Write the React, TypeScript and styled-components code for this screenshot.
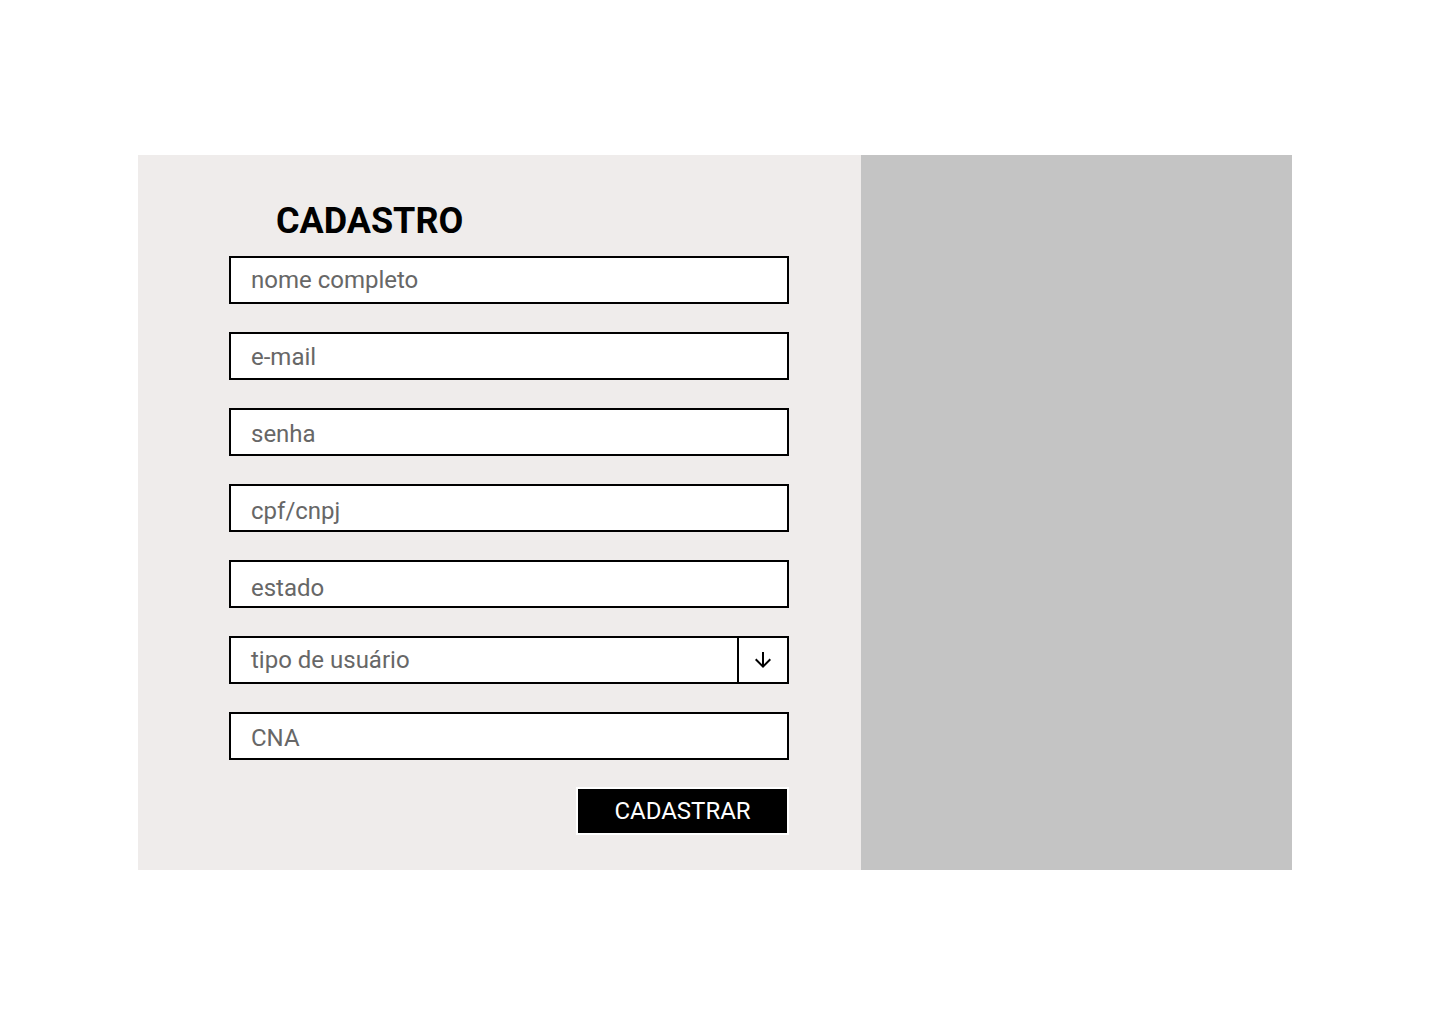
import styled, { createGlobalStyle } from 'styled-components'
import { MdArrowDownward } from 'react-icons/md'

const GlobalStyle = createGlobalStyle`
    body {
        margin: 0;
        background: #fff;
        font-family: Roboto, "Liberation Sans", sans-serif;
    }
    * {
        box-sizing: border-box;
    }
`

const Page = styled.div`
    padding: 155px 0 0 138px;
`

const Panel = styled.main`
    display: flex;
    width: 1154px;
`

const FormSide = styled.section`
    width: 723px;
    background-color: #efeceb;
    padding: 45px 72px 35px 91px;
`

const ImageSide = styled.aside`
    flex: 1;
    background-color: #c4c4c4;
`

const Title = styled.h1`
    margin: 0 0 14px 47px;
    font-size: 36px;
    font-weight: 700;
    line-height: 42px;
    color: #000;
`

const Form = styled.form`
    display: flex;
    flex-direction: column;
    gap: 28px;
`

const fieldText = `
    font-family: Roboto, "Liberation Sans", sans-serif;
    font-size: 24px;
    color: #222;
`

// $shift nudges the text down by that many pixels inside the box
const Field = styled.input<{ $shift?: number }>`
    ${fieldText}
    width: 560px;
    height: 48px;
    border: 2px solid #000;
    background: #fff;
    padding: ${p => (p.$shift || 0) * 2}px 20px 0;
    outline: none;
    &::placeholder {
        color: #676767;
    }
`

const SelectBox = styled.div`
    display: flex;
    width: 560px;
    height: 48px;
    border: 2px solid #000;
    background: #fff;
`

const SelectText = styled.span`
    ${fieldText}
    flex: 1;
    display: flex;
    align-items: center;
    padding: 0 20px;
    color: #676767;
`

const ArrowCell = styled.button`
    width: 50px;
    border: none;
    border-left: 2px solid #000;
    background: #fff;
    padding: 0;
    display: flex;
    align-items: center;
    justify-content: center;
    color: #000;
    cursor: pointer;
`

const SubmitButton = styled.button`
    align-self: flex-end;
    margin-top: -1px;
    width: 213px;
    height: 48px;
    background: #000;
    border: 2px solid #fff;
    color: #fff;
    font-family: Roboto, "Liberation Sans", sans-serif;
    font-size: 24px;
    cursor: pointer;
`

const fields = [
    { label: 'nome completo', shift: 0 },
    { label: 'e-mail', shift: 1 },
    { label: 'senha', shift: 2 },
    { label: 'cpf/cnpj', shift: 3 },
    { label: 'estado', shift: 4 },
]

const App = () => {
    return (
        <Page>
            <GlobalStyle />
            <Panel>
                <FormSide>
                    <Title>CADASTRO</Title>
                    <Form onSubmit={e => e.preventDefault()}>
                        {fields.map(f => (
                            <Field
                                key={f.label}
                                placeholder={f.label}
                                $shift={f.shift}
                                type={f.label === 'senha' ? 'password' : 'text'}
                            />
                        ))}
                        <SelectBox>
                            <SelectText>tipo de usuário</SelectText>
                            <ArrowCell type="button">
                                <MdArrowDownward size={24} />
                            </ArrowCell>
                        </SelectBox>
                        <Field placeholder="CNA" $shift={2} />
                        <SubmitButton type="submit">CADASTRAR</SubmitButton>
                    </Form>
                </FormSide>
                <ImageSide />
            </Panel>
        </Page>
    )
}

export default App
